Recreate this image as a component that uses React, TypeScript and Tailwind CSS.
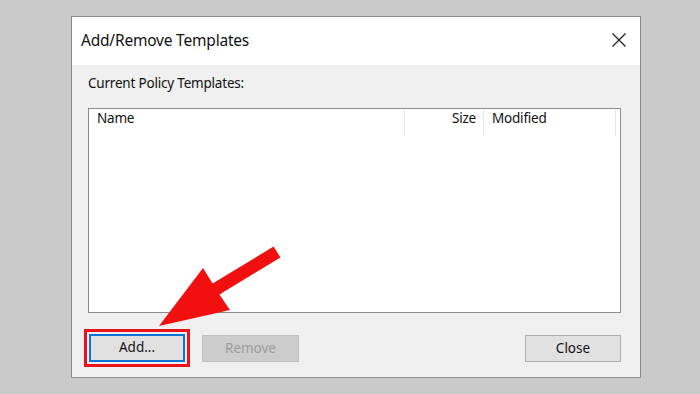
import React from "react";

export default function App() {
  const font = { fontFamily: '"Noto Sans", "Open Sans", Arial, sans-serif' };
  return (
    <div
      className="relative w-[700px] h-[394px] bg-[#cacaca] overflow-hidden pl-[71px] pt-[16px]"
      style={font}
    >
      <div className="w-[570px] h-[362px] border border-[#8a8a8a] bg-[#f0f0f0] flex flex-col">
        <div className="h-[48px] bg-white flex items-center justify-between pl-[9px] pr-[12px] shrink-0">
          <span className="text-[15.5px] text-[#111] tracking-[-0.2px]">Add/Remove Templates</span>
          <svg width="16" height="16" viewBox="0 0 16 16" className="mr-[1px] mb-[2px]">
            <path d="M1.5 1.5 L14.5 14.5 M14.5 1.5 L1.5 14.5" stroke="#222" strokeWidth="1.3" fill="none" />
          </svg>
        </div>
        <div className="flex-1 flex flex-col pl-[16px] pr-[19px]">
          <div className="pt-[8px] h-[43px] text-[13.5px] text-[#111] tracking-[-0.2px] leading-[20px]">
            Current Policy Templates:
          </div>
          <div className="h-[205px] border border-[#8c8c8c] bg-white">
            <div className="flex h-[26px] text-[13.5px] text-[#111] leading-[18px] tracking-[-0.2px]">
              <div className="w-[316px] pl-[8px] pt-[0px] border-r border-[#e5e5e5]">Name</div>
              <div className="w-[79px] pr-[7px] text-right border-r border-[#e5e5e5]">Size</div>
              <div className="w-[132px] pl-[8px] border-r border-[#e5e5e5]">Modified</div>
            </div>
          </div>
          <div className="flex mt-[21px] h-[28px]">
            <button className="ml-[1px] w-[96px] h-[28px] bg-[#e1e1e1] border-2 border-[#0a74d6] text-[13.5px] text-[#111] leading-none outline-[3px] outline-solid outline-[#e8131b] outline-offset-[2px]">
              Add...
            </button>
            <button className="ml-[17px] w-[97px] h-[27px] mt-[1px] bg-[#cccccc] border border-[#bfbfbf] text-[13.5px] text-[#9d9d9d] leading-none">
              Remove
            </button>
            <button className="ml-auto w-[96px] h-[27px] mt-[1px] bg-[#e1e1e1] border border-[#adadad] text-[13.5px] text-[#111] leading-none">
              Close
            </button>
          </div>
        </div>
      </div>
      <svg className="absolute left-0 top-0 pointer-events-none" width="700" height="394" viewBox="0 0 700 394">
        <polygon
          points="273.6,246.5 280.4,257.5 219.4,294.5 230,310 159,326 203,268 212.6,283.5"
          fill="#f20f0f"
        />
      </svg>
    </div>
  );
}
